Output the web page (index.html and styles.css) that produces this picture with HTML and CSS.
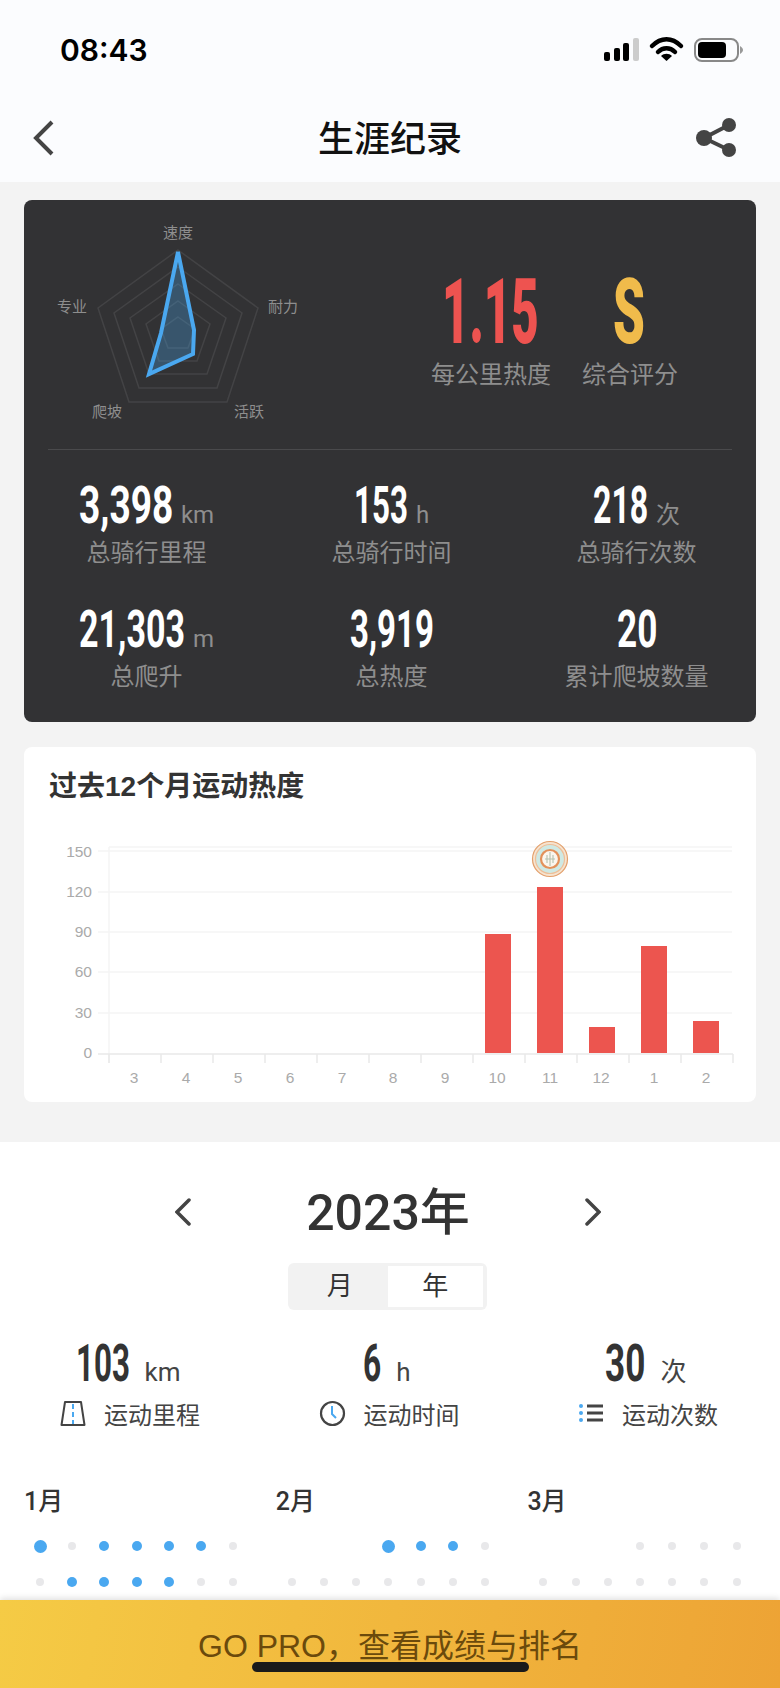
FILE: index.html
```html
<!DOCTYPE html>
<html lang="zh-CN">
<head>
    <meta charset="UTF-8">
    <meta name="viewport" content="width=device-width, initial-scale=1.0">
    <title>生涯纪录</title>
    <link rel="stylesheet" href="styles.css">
</head>
<body>
    <div class="header">
        <div class="status">
            <span class="time">08:43</span>
            <svg class="status-icons" width="140" height="26" viewBox="604 37 140 26">
                <rect x="604" y="52" width="6" height="9" rx="2" fill="#000"/>
                <rect x="614" y="48" width="6" height="13" rx="2" fill="#000"/>
                <rect x="623" y="43" width="6" height="18" rx="2" fill="#000"/>
                <rect x="633" y="38" width="6" height="23" rx="2" fill="#ccc"/>
                <path d="M652 46 C661 37 672 37 681 46" fill="none" stroke="#000" stroke-width="4.5" stroke-linecap="round"/>
                <path d="M658 52 C663 47 670 47 675 52" fill="none" stroke="#000" stroke-width="4.5" stroke-linecap="round"/>
                <path d="M661 56 C664 53 669 53 672 56 L666.5 61 Z" fill="#000"/>
                <rect x="695" y="39" width="43" height="22" rx="7" fill="none" stroke="#888" stroke-width="2"/>
                <rect x="698" y="42" width="28" height="16" rx="4" fill="#000"/>
                <path d="M740 46 C742 47 743 49 743 50 C743 51 742 53 740 54 Z" fill="#999"/>
            </svg>
        </div>
        <div class="nav">
            <svg width="24" height="38" viewBox="32 119 24 38">
                <path d="M52 122 L36 138 L52 154" fill="none" stroke="#444" stroke-width="4"/>
            </svg>
            <h1>生涯纪录</h1>
            <svg class="nav-share" width="42" height="40" viewBox="695 118 42 40">
                <path d="M729 125 L704 138 L729 150" fill="none" stroke="#444" stroke-width="4"/>
                <circle cx="704" cy="138" r="8" fill="#444"/>
                <circle cx="729" cy="125" r="7" fill="#444"/>
                <circle cx="729" cy="150" r="7" fill="#444"/>
            </svg>
        </div>
    </div>

    <div class="content">
        <div class="career-card">
            <div class="hero">
                <svg class="radar" width="290" height="249" viewBox="24 200 290 249">
                    <g fill="none" stroke="#434345" stroke-width="1.5">
                        <polygon points="178,250 258,308 227,402 129,402 98,308"/>
                        <polygon points="178,267 242,313 217,388 139,388 114,313"/>
                        <polygon points="178,284 226,318 207,374 149,374 130,318"/>
                        <polygon points="178,301 210,324 197,361 159,361 146,324"/>
                        <polygon points="178,317 195,329 188,348 168,348 161,329"/>
                    </g>
                    <polygon points="178,252 194,330 193,354 149,374 161,333" fill="#4aa8f0" fill-opacity="0.3" stroke="#4aa8f0" stroke-width="4"/>
                    <g class="radar-label">
                        <text x="178" y="238" text-anchor="middle">速度</text>
                        <text x="283" y="312" text-anchor="middle">耐力</text>
                        <text x="72" y="312" text-anchor="middle">专业</text>
                        <text x="107" y="417" text-anchor="middle">爬坡</text>
                        <text x="249" y="417" text-anchor="middle">活跃</text>
                    </g>
                </svg>
                <div class="score heat">
                    <svg class="fig-hero red" width="97" height="65"><text x="0" y="65" textLength="176" lengthAdjust="spacingAndGlyphs">1.15</text></svg>
                    <p>每公里热度</p>
                </div>
                <div class="score rank">
                    <svg class="fig-hero yellow" width="32" height="65"><text x="0" y="65" textLength="58" lengthAdjust="spacingAndGlyphs">S</text></svg>
                    <p>综合评分</p>
                </div>
            </div>
            <div class="divider"></div>
            <div class="stats">
                <div class="stat">
                    <div class="value"><svg class="fig" width="94" height="36"><text x="0" y="36" textLength="145" lengthAdjust="spacingAndGlyphs">3,398</text></svg><span class="unit">km</span></div>
                    <p>总骑行里程</p>
                </div>
                <div class="stat">
                    <div class="value"><svg class="fig" width="54" height="36"><text x="0" y="36" textLength="83" lengthAdjust="spacingAndGlyphs">153</text></svg><span class="unit">h</span></div>
                    <p>总骑行时间</p>
                </div>
                <div class="stat">
                    <div class="value"><svg class="fig" width="55" height="36"><text x="0" y="36" textLength="85" lengthAdjust="spacingAndGlyphs">218</text></svg><span class="unit">次</span></div>
                    <p>总骑行次数</p>
                </div>
                <div class="stat">
                    <div class="value"><svg class="fig" width="106" height="36"><text x="0" y="36" textLength="163" lengthAdjust="spacingAndGlyphs">21,303</text></svg><span class="unit">m</span></div>
                    <p>总爬升</p>
                </div>
                <div class="stat">
                    <div class="value"><svg class="fig" width="84" height="36"><text x="0" y="36" textLength="129" lengthAdjust="spacingAndGlyphs">3,919</text></svg></div>
                    <p>总热度</p>
                </div>
                <div class="stat">
                    <div class="value"><svg class="fig" width="40" height="36"><text x="0" y="36" textLength="62" lengthAdjust="spacingAndGlyphs">20</text></svg></div>
                    <p>累计爬坡数量</p>
                </div>
            </div>
        </div>

        <div class="chart-card">
            <h2>过去12个月运动热度</h2>
            <svg class="chart" width="732" height="272" viewBox="24 830 732 272">
                <g stroke="#f4f4f4" stroke-width="1.5">
                    <line x1="109" y1="847" x2="732" y2="847"/>
                    <line x1="98" y1="851" x2="732" y2="851"/>
                    <line x1="98" y1="892" x2="732" y2="892"/>
                    <line x1="98" y1="932" x2="732" y2="932"/>
                    <line x1="98" y1="972" x2="732" y2="972"/>
                    <line x1="98" y1="1013" x2="732" y2="1013"/>
                    <line x1="109" y1="847" x2="109" y2="1063"/>
                </g>
                <g stroke="#e9e9e9" stroke-width="1.5">
                    <line x1="98" y1="1054" x2="733" y2="1054"/>
                    <line x1="109" y1="1054" x2="109" y2="1063"/>
                    <line x1="161" y1="1054" x2="161" y2="1063"/>
                    <line x1="213" y1="1054" x2="213" y2="1063"/>
                    <line x1="265" y1="1054" x2="265" y2="1063"/>
                    <line x1="317" y1="1054" x2="317" y2="1063"/>
                    <line x1="369" y1="1054" x2="369" y2="1063"/>
                    <line x1="421" y1="1054" x2="421" y2="1063"/>
                    <line x1="473" y1="1054" x2="473" y2="1063"/>
                    <line x1="525" y1="1054" x2="525" y2="1063"/>
                    <line x1="577" y1="1054" x2="577" y2="1063"/>
                    <line x1="629" y1="1054" x2="629" y2="1063"/>
                    <line x1="681" y1="1054" x2="681" y2="1063"/>
                    <line x1="733" y1="1054" x2="733" y2="1063"/>
                </g>
                <g class="axis-label" text-anchor="end">
                    <text x="92" y="857">150</text>
                    <text x="92" y="897">120</text>
                    <text x="92" y="937">90</text>
                    <text x="92" y="977">60</text>
                    <text x="92" y="1018">30</text>
                    <text x="92" y="1058">0</text>
                </g>
                <g class="axis-label" text-anchor="middle">
                    <text x="134" y="1083">3</text>
                    <text x="186" y="1083">4</text>
                    <text x="238" y="1083">5</text>
                    <text x="290" y="1083">6</text>
                    <text x="342" y="1083">7</text>
                    <text x="393" y="1083">8</text>
                    <text x="445" y="1083">9</text>
                    <text x="497" y="1083">10</text>
                    <text x="550" y="1083">11</text>
                    <text x="601" y="1083">12</text>
                    <text x="654" y="1083">1</text>
                    <text x="706" y="1083">2</text>
                </g>
                <g fill="#ec554f">
                    <rect x="485" y="934" width="26" height="119"/>
                    <rect x="537" y="887" width="26" height="166"/>
                    <rect x="589" y="1027" width="26" height="26"/>
                    <rect x="641" y="946" width="26" height="107"/>
                    <rect x="693" y="1021" width="26" height="32"/>
                </g>
                <!-- medal above the best month -->
                <circle cx="550" cy="859" r="17.5" fill="#f6e3cf" stroke="#e3a06c" stroke-width="1.2"/>
                <circle cx="550" cy="859" r="14.5" fill="#cfe9e4" stroke="#eebf98" stroke-width="1.2"/>
                <circle cx="550" cy="859" r="9" fill="#fbf6ee" stroke="#e3915a" stroke-width="2.2"/>
                <path d="M550 852 V866 M545 859 H555 M547 855 V863 M553 855 V863" fill="none" stroke="#b5c2b0" stroke-width="1.1"/>
            </svg>
        </div>
    </div>

    <div class="year-panel">
        <div class="year-nav">
            <svg width="17" height="28" viewBox="175 1198 17 28"><path d="M189 1200 L177 1212 L189 1224" fill="none" stroke="#444" stroke-width="3.5" stroke-linecap="round"/></svg>
            <span class="year">2023年</span>
            <svg width="17" height="28" viewBox="585 1198 17 28"><path d="M588 1200 L600 1212 L588 1224" fill="none" stroke="#444" stroke-width="3.5" stroke-linecap="round"/></svg>
        </div>
        <div class="segment">
            <span>月</span>
            <span class="active">年</span>
        </div>
        <div class="summary">
            <div class="sum-item">
                <div class="value"><svg class="fig dark" width="54" height="36"><text x="0" y="36" textLength="83" lengthAdjust="spacingAndGlyphs">103</text></svg><span class="unit">km</span></div>
                <div class="sum-label">
                    <svg width="26" height="27" viewBox="0 0 26 27">
                        <path d="M5 2 H21 L24.500 25 H1.500 Z" fill="none" stroke="#444" stroke-width="2" stroke-linejoin="round"/>
                        <path d="M13 4 V24" stroke="#4aa8f0" stroke-width="2" stroke-dasharray="5 3"/>
                    </svg>
                    <span>运动里程</span>
                </div>
            </div>
            <div class="sum-item">
                <div class="value"><svg class="fig dark" width="18" height="36"><text x="0" y="36" textLength="28" lengthAdjust="spacingAndGlyphs">6</text></svg><span class="unit">h</span></div>
                <div class="sum-label">
                    <svg width="27" height="27" viewBox="0 0 27 27">
                        <circle cx="13.500" cy="13.500" r="11.500" fill="none" stroke="#444" stroke-width="2.200"/>
                        <path d="M13 6 V14 L17 18" fill="none" stroke="#4aa8f0" stroke-width="2"/>
                    </svg>
                    <span>运动时间</span>
                </div>
            </div>
            <div class="sum-item">
                <div class="value"><svg class="fig dark" width="40" height="36"><text x="0" y="36" textLength="62" lengthAdjust="spacingAndGlyphs">30</text></svg><span class="unit">次</span></div>
                <div class="sum-label">
                    <svg width="26" height="20" viewBox="0 0 26 20">
                        <g fill="#4aa8f0"><rect x="1" y="1" width="4" height="4" rx="2"/><rect x="1" y="8" width="4" height="4" rx="2"/><rect x="1" y="15" width="4" height="4" rx="2"/></g>
                        <g fill="#444"><rect x="9" y="1.500" width="16" height="3"/><rect x="9" y="8.500" width="16" height="3"/><rect x="9" y="15.500" width="16" height="3"/></g>
                    </svg>
                    <span>运动次数</span>
                </div>
            </div>
        </div>
        <div class="months">
            <div class="month">
                <h3>1月</h3>
                <div class="days">
                    <i class="big"></i><i class="dot"></i><i class="on"></i><i class="on"></i><i class="on"></i><i class="on"></i><i class="dot"></i>
                    <i class="dot"></i><i class="on"></i><i class="on"></i><i class="on"></i><i class="on"></i><i class="dot"></i><i class="dot"></i>
                </div>
            </div>
            <div class="month">
                <h3>2月</h3>
                <div class="days">
                    <i></i><i></i><i></i><i class="big"></i><i class="on"></i><i class="on"></i><i class="dot"></i>
                    <i class="dot"></i><i class="dot"></i><i class="dot"></i><i class="dot"></i><i class="dot"></i><i class="dot"></i><i class="dot"></i>
                </div>
            </div>
            <div class="month">
                <h3>3月</h3>
                <div class="days">
                    <i></i><i></i><i></i><i class="dot"></i><i class="dot"></i><i class="dot"></i><i class="dot"></i>
                    <i class="dot"></i><i class="dot"></i><i class="dot"></i><i class="dot"></i><i class="dot"></i><i class="dot"></i><i class="dot"></i>
                </div>
            </div>
        </div>
    </div>

    <div class="pro-bar">GO PRO，查看成绩与排名</div>
    <div class="home-indicator"></div>
</body>
</html>
```

FILE: styles.css
```css
body {
    font-family: "Liberation Sans", "Noto Sans CJK SC", sans-serif;
    margin: 0;
    width: 780px;
    height: 1688px;
    overflow: hidden;
    position: relative;
    background: #fff;
    color: #333;
}
h1, h2, h3, p {
    margin: 0;
    font-weight: normal;
}
svg {
    display: block;
}

/* header */
.header {
    background: #fbfcfe;
    height: 182px;
}
.status {
    height: 92px;
    display: flex;
    justify-content: space-between;
    padding: 37px 36px 0 60px;
    box-sizing: border-box;
}
.time {
    font-family: Inter, sans-serif;
    font-weight: 600;
    font-size: 30px;
    line-height: 26px;
    color: #000;
}
.nav {
    height: 90px;
    display: grid;
    grid-template-columns: 1fr auto 1fr;
    align-items: center;
    padding: 0 43px 0 32px;
    box-sizing: border-box;
    margin-top: 1px;
}
.nav h1 {
    font-size: 36px;
    font-weight: 500;
    color: #111;
    margin: 0 0 4px 11px;
}
.nav-share {
    justify-self: end;
}

/* gray area */
.content {
    background: #f3f3f3;
    padding: 18px 24px 40px;
}
.career-card {
    background: #323234;
    border-radius: 8px;
    height: 522px;
    color: #8e8e8e;
}
.hero {
    display: flex;
    height: 249px;
}
.radar-label {
    font-size: 15px;
    fill: #8e8e8e;
}
.score {
    text-align: center;
    padding-top: 78px;
    white-space: nowrap;
}
.score p {
    font-size: 24px;
    line-height: 24px;
    margin-top: 20px;
}
.heat {
    width: 118px;
    margin-left: 117px;
}
.rank {
    width: 94px;
    margin-left: 33px;
}
.fig-hero {
    margin: 0 auto;
    overflow: visible;
    font-family: Roboto, sans-serif;
    font-weight: 900;
    font-size: 91px;
}
.fig-hero text {
    transform: scaleX(0.55);
}
.red {
    fill: #ee5350;
}
.yellow {
    fill: #f0bb4b;
}
.divider {
    height: 1px;
    margin: 0 24px;
    background: #4a4a4c;
}
.stats {
    display: grid;
    grid-template-columns: repeat(3, 245px);
    row-gap: 43px;
    padding-top: 37px;
}
.stat {
    text-align: center;
}
.stat p {
    font-size: 24px;
    line-height: 30px;
    margin-top: 15px;
}
.value {
    display: flex;
    justify-content: center;
    align-items: baseline;
    height: 36px;
}
.fig {
    overflow: visible;
    font-family: Roboto, sans-serif;
    font-weight: 700;
    font-size: 51px;
    fill: #fff;
}
.fig text {
    transform: scaleX(0.65);
}
.fig.dark {
    fill: #333;
}
.unit {
    font-family: Roboto, "Noto Sans CJK SC", sans-serif;
    font-size: 24px;
    line-height: 24px;
    margin-left: 8px;
}

/* chart */
.chart-card {
    background: #fff;
    border-radius: 8px;
    margin-top: 25px;
    height: 355px;
}
.chart-card h2 {
    font-size: 28px;
    font-weight: 700;
    line-height: 40px;
    padding: 20px 0 0 25px;
    margin-bottom: 23px;
}
.axis-label {
    font-size: 15.5px;
    fill: #aaa;
}

/* year */
.year-panel {
    background: #fff;
}
.year-nav {
    width: 426px;
    height: 60px;
    margin: 40px 0 0 175px;
    display: flex;
    align-items: center;
    justify-content: space-between;
}
.year {
    font-family: Roboto, "Noto Sans CJK SC", sans-serif;
    font-size: 50px;
    font-weight: 500;
    margin-bottom: 8px;
}
.segment {
    width: 199px;
    height: 47px;
    box-sizing: border-box;
    margin: 21px 0 0 288px;
    padding: 3px 4px;
    background: #f2f2f2;
    border-radius: 6px;
    display: flex;
    font-size: 26px;
}
.segment span {
    flex: 1;
    text-align: center;
    line-height: 41px;
}
.segment .active {
    background: #fff;
}
.summary {
    display: grid;
    grid-template-columns: 260px 258px 260px;
    margin-top: 35px;
}
.sum-item .value {
    margin-right: 4px;
}
.sum-item .unit {
    font-size: 26px;
    margin-left: 15px;
    color: #444;
}
.sum-label {
    display: flex;
    justify-content: center;
    align-items: center;
    gap: 18px;
    height: 32px;
    margin-top: 16px;
    font-size: 24px;
    color: #444;
}
.months {
    display: grid;
    grid-template-columns: repeat(3, 225.4px);
    column-gap: 26.3px;
    padding: 0 24px;
    margin-top: 55px;
}
.month h3 {
    font-family: Roboto, "Noto Sans CJK SC", sans-serif;
    font-size: 25px;
    font-weight: 500;
    line-height: 36px;
    margin-bottom: 8px;
}
.days {
    display: grid;
    grid-template-columns: repeat(7, 32.2px);
    grid-auto-rows: 36px;
    place-items: center;
}
.days .dot {
    width: 8px;
    height: 8px;
    border-radius: 50%;
    background: #e8e8ea;
}
.days .on {
    width: 10px;
    height: 10px;
    border-radius: 50%;
    background: #4aa8f0;
}
.days .big {
    width: 13px;
    height: 13px;
    border-radius: 50%;
    background: #4aa8f0;
}

/* overlays */
.pro-bar {
    position: absolute;
    left: 0;
    right: 0;
    bottom: 0;
    height: 88px;
    padding-top: 24px;
    box-sizing: border-box;
    background: linear-gradient(100deg, #f5cb45, #eda335);
    box-shadow: 0 -2px 6px rgba(0, 0, 0, 0.12);
    color: #6b4a0c;
    font-size: 32px;
    line-height: 44px;
    text-align: center;
}
.home-indicator {
    position: absolute;
    left: 252px;
    top: 1662px;
    width: 277px;
    height: 10px;
    border-radius: 5px;
    background: #1a1a1a;
}
```
